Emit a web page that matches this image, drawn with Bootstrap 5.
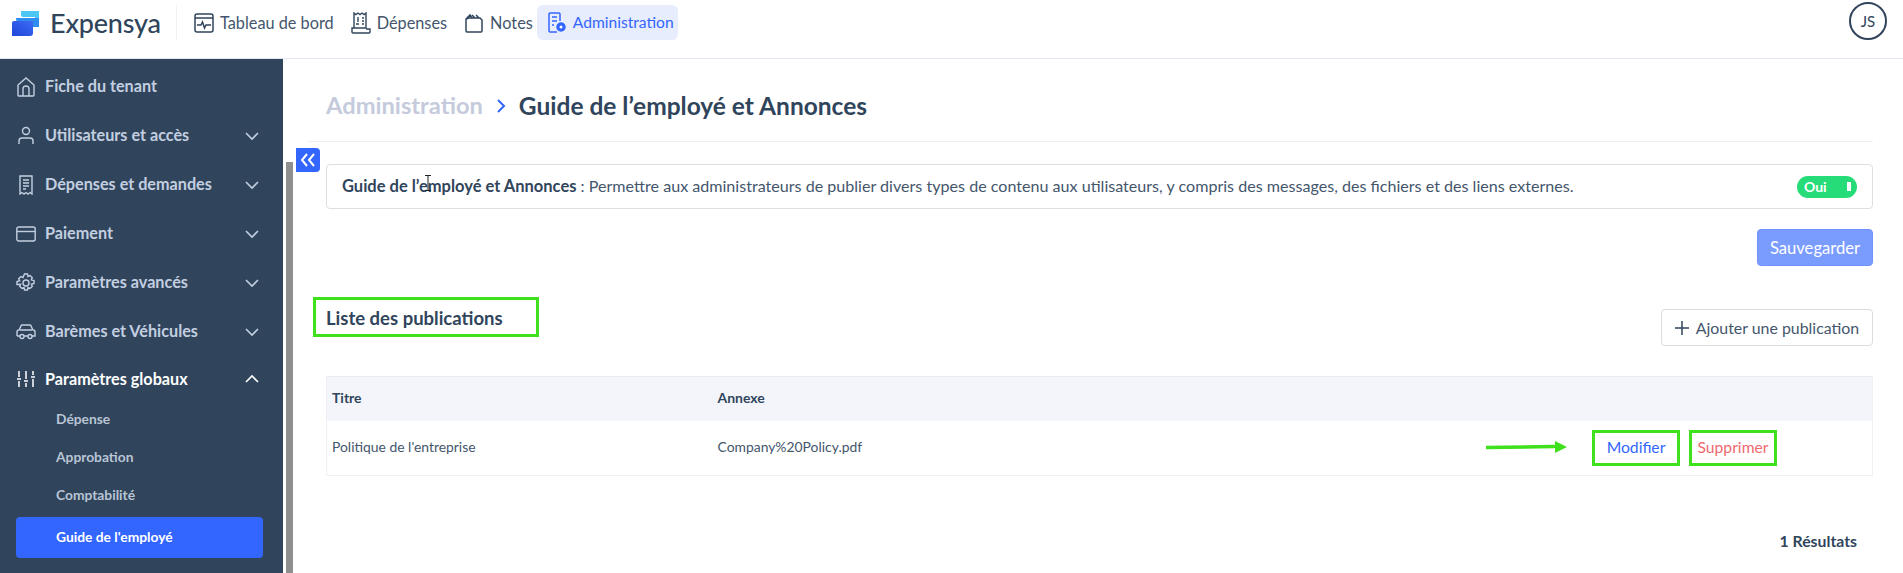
<!DOCTYPE html>
<html lang="fr">
<head>
<meta charset="utf-8">
<title>Expensya</title>
<link href="https://cdn.jsdelivr.net/npm/bootstrap@5.3.0/dist/css/bootstrap.min.css" rel="stylesheet">
<style>
html,body{height:573px;overflow:hidden}
body{font-family:Lato,"Liberation Sans",sans-serif;color:#30455c;background:#fff;display:flex;flex-direction:column;position:relative}
svg{display:block;flex:none}
.top-strip{height:59px;padding:5px 16px 0 11px;border-bottom:1px solid #e4e4f4;flex:none;align-items:flex-start}
.brand-box{width:166px;height:35px;border-right:1px solid #f0f0f0;margin-right:17px;gap:9px}
.brand-word{font-size:27px;font-weight:500;letter-spacing:-.2px;line-height:35px;color:#30455c}
.top-link{height:35px;display:flex;align-items:center;gap:6px;font-size:16.3px;color:#44566c;text-decoration:none;margin-right:17px;padding-top:1px}
.top-link.is-on{background:#e8edfd;color:#3366ff;border-radius:6px;padding:1px 4px 0 10px;margin-left:-13px;margin-right:0;width:141px;font-size:15.6px}
.avatar-ring{width:38px;height:38px;border:2px solid #30455c;border-radius:50%;margin:-3px 0 0 auto;font-size:15px;color:#30455c;display:flex;align-items:center;justify-content:center}
.shell{flex:1;min-height:0}
.side-panel{width:283px;background:#30455c;padding:3px 0 0 16px;flex:none;overflow:hidden}
.side-row{height:49px;width:244px;display:flex;align-items:center;color:#c3cfe0;font-size:16.2px;font-weight:700;text-decoration:none}
.side-row .lab{margin-left:9px;flex:1}
.side-row.is-open{color:#fff;margin-top:2px;height:42px}
.side-sub{display:flex;align-items:center;height:38px;width:247px;padding-left:40px;color:#b9c4d4;font-size:13.8px;font-weight:700;text-decoration:none}
.side-sub.is-on{height:41px;background:#3366ff;color:#fff;border-radius:4px;margin-top:3px}
.gutter{width:13px;flex:none;padding:103px 3px 0 3px}
.thumb{height:100%;background:#8f8f8f}
.work{flex:1;min-width:0;padding-left:12px;position:relative}
.head-strip{height:83px;padding:12px 0 0 18px;margin-right:30px;border-bottom:1px solid #eceef2;gap:12px;font-size:24.5px;font-weight:700}
.crumb-off{color:#c5cbdc;font-size:23.7px}
.body-pad{padding:22px 30px 0 18px}
.info-box{height:45px;border:1px solid #dfdfe3;border-radius:4px;padding:0 15px 0 15px;font-size:16.1px;color:#44566c}
.info-box b{color:#30455c;font-size:16.5px}
.switch-pill{width:60px;height:22px;background:#26dc78;border-radius:11px;color:#fff;font-size:14px;font-weight:700;padding:0 6px 0 7px;margin-left:auto}
.switch-bar{width:4px;height:9px;background:#fff;margin-left:auto}
.save-btn{--bs-btn-bg:#7b9cff;--bs-btn-border-color:#6f92fb;--bs-btn-color:#fff;width:116px;height:37px;padding:1px 0 0;font-size:16.6px;border-radius:4px}
.list-row{margin-top:31px;height:49px}
.list-title{width:226px;height:40px;border:3px solid #3fe01c;padding:2px 0 0 10px;margin:0 0 0 -13px;font-size:18.5px;font-weight:700;color:#30455c;display:flex;align-items:center}
.add-btn{--bs-btn-bg:#fff;--bs-btn-border-color:#dcdcdf;--bs-btn-color:#44566c;width:212px;height:37px;margin-top:12px;padding:0;font-size:15.9px;border-radius:4px;gap:7px}
.pub-table{margin:30px 0 0;table-layout:fixed;border:1px solid #f0f0f5;font-size:13.9px;--bs-table-color:#44566c}
.pub-table th{background:#f3f5fb;height:44px;padding:0 5px 2px;vertical-align:middle;font-weight:700;color:#30455c;font-size:14px;border-bottom:0;border-top:1px solid #e8eaf4}
.pub-table td{height:55px;padding:0 5px;vertical-align:middle;border-bottom:1px solid #f0f0f5}
.act-wrap{padding-right:90px;gap:9px}
.mark-btn{width:88px;height:36px;border:3px solid #3fe01c;display:flex;align-items:center;justify-content:center;font-size:15.7px;text-decoration:none}
.act-edit{color:#3366ff}
.act-del{color:#f0696f}
.total-line{margin-top:55px;padding-right:16px;font-size:15.8px;font-weight:700;line-height:20px;text-align:right}
.fold-tab{position:absolute;left:0;top:89px;width:24px;height:24px;background:#3366ff;border-radius:0 4px 4px 0;display:flex;align-items:center;justify-content:center}
.arrow-mark{position:absolute;left:1486px;top:440px}
.cursor-mark{position:absolute;left:424px;top:175px}
</style>
</head>
<body>
<nav class="top-strip d-flex">
  <div class="brand-box d-flex align-items-center">
    <svg width="30" height="28" viewBox="0 0 30 28"><defs><linearGradient id="g1" x1="0" y1="1" x2="1" y2="0"><stop offset="0" stop-color="#1f45d8"/><stop offset="1" stop-color="#3c6cf5"/></linearGradient></defs><path d="M10 2h18v8H24V8H12a2 2 0 0 1-2-2z" fill="#4cc6f5"/><path d="M5 9h23v9H6z" fill="#2f8df0" /><path d="M1 14a2 2 0 0 1 2-2h19v12a3 3 0 0 1-3 3H1z" fill="url(#g1)"/></svg>
    <span class="brand-word">Expensya</span>
  </div>
  <a class="top-link" href="#"><svg width="20" height="20" viewBox="0 0 20 20" fill="none" stroke="#30455c" stroke-width="1.5"><rect x="1" y="1" width="18" height="18" rx="2"/><path d="M1 5h18M3 12h4l1.500-3 2 6 1.500-3h5"/></svg>Tableau de bord</a>
  <a class="top-link" href="#"><svg width="20" height="22" viewBox="0 0 20 22" fill="none" stroke="#30455c" stroke-width="1.400"><path d="M3 1l2 1.500L7 1l2 1.500L11 1l2 1.500L15 1v15H3zM3 16H1v4a1 1 0 0 0 1 1h16a1 1 0 0 0 1-1v-3H15"/><path d="M11 6h2M11 9h2M11 12h2M5 12h3M7 5v5"/></svg>Dépenses</a>
  <a class="top-link" href="#"><svg width="20" height="20" viewBox="0 0 20 20" fill="none" stroke="#30455c" stroke-width="1.500"><path d="M2 6l3-1h11l2 2v11a1 1 0 0 1-1 1H3a1 1 0 0 1-1-1zM2 6l4-4 2 3M8 2l3 3M12 2l3 3"/></svg>Notes</a>
  <a class="top-link is-on" href="#"><svg width="20" height="22" viewBox="0 0 20 22" fill="none" stroke="#3366ff" stroke-width="1.500"><path d="M10 20H3a1 1 0 0 1-1-1V2a1 1 0 0 1 1-1h9a1 1 0 0 1 1 1v7M5 5h5M5 9h5M5 13h2"/><circle cx="14" cy="15" r="4" fill="#3366ff"/><circle cx="14" cy="15" r="1.500" fill="#fff" stroke="none"/></svg>Administration</a>
  <div class="avatar-ring">JS</div>
</nav>
<div class="shell d-flex">
  <aside class="side-panel">
    <a class="side-row" href="#"><svg width="20" height="20" viewBox="0 0 20 20" fill="none" stroke="#c3cfe0" stroke-width="1.400"><path d="M2 8l8-7 8 7v10a1 1 0 0 1-1 1H3a1 1 0 0 1-1-1z"/><path d="M7 19v-7a3 3 0 0 1 6 0v7"/></svg><span class="lab">Fiche du tenant</span></a>
    <a class="side-row" href="#"><svg width="20" height="20" viewBox="0 0 20 20" fill="none" stroke="#c3cfe0" stroke-width="1.400"><circle cx="10" cy="5" r="3.500"/><path d="M3 18v-3a3 3 0 0 1 3-3h8a3 3 0 0 1 3 3v3"/></svg><span class="lab">Utilisateurs et accès</span><svg width="16" height="10" viewBox="0 0 16 10" fill="none" stroke="#c3cfe0" stroke-width="1.600"><path d="M2 2l6 6 6-6"/></svg></a>
    <a class="side-row" href="#"><svg width="20" height="20" viewBox="0 0 20 20" fill="none" stroke="#c3cfe0" stroke-width="1.400"><path d="M4 1h12v18l-2-1.500-2 1.500-2-1.500L8 19l-2-1.500L4 19z"/><path d="M7 5h6M7 8h6M7 11h6M7 14h3"/></svg><span class="lab">Dépenses et demandes</span><svg width="16" height="10" viewBox="0 0 16 10" fill="none" stroke="#c3cfe0" stroke-width="1.600"><path d="M2 2l6 6 6-6"/></svg></a>
    <a class="side-row" href="#"><svg width="20" height="16" viewBox="0 0 20 16" fill="none" stroke="#c3cfe0" stroke-width="1.400"><rect x=".8" y="1" width="18.400" height="14" rx="2"/><path d="M.8 5.500h18.400"/></svg><span class="lab">Paiement</span><svg width="16" height="10" viewBox="0 0 16 10" fill="none" stroke="#c3cfe0" stroke-width="1.600"><path d="M2 2l6 6 6-6"/></svg></a>
    <a class="side-row" href="#"><svg width="20" height="20" viewBox="0 0 20 20" fill="none" stroke="#c3cfe0" stroke-width="1.400"><circle cx="10" cy="10" r="3"/><path d="M8.500 1h3l.5 2.500 2-1 2.300 2.200-1 2.100 2.700.7v3l-2.700.7 1 2.100-2.300 2.200-2-1-.5 2.500h-3l-.5-2.500-2 1-2.300-2.200 1-2.100L1 11.500v-3l2.700-.7-1-2.100L5 3.500l2 1z"/></svg><span class="lab">Paramètres avancés</span><svg width="16" height="10" viewBox="0 0 16 10" fill="none" stroke="#c3cfe0" stroke-width="1.600"><path d="M2 2l6 6 6-6"/></svg></a>
    <a class="side-row" href="#"><svg width="20" height="16" viewBox="0 0 20 16" fill="none" stroke="#c3cfe0" stroke-width="1.400"><path d="M1 12V8a2 2 0 0 1 2-2l2-4a1 1 0 0 1 1-1h8a1 1 0 0 1 1 1l2 4a2 2 0 0 1 2 2v4h-3M1 12h3M8 12h4M4 6h12"/><circle cx="6" cy="12.500" r="2"/><circle cx="14" cy="12.500" r="2"/></svg><span class="lab">Barèmes et Véhicules</span><svg width="16" height="10" viewBox="0 0 16 10" fill="none" stroke="#c3cfe0" stroke-width="1.600"><path d="M2 2l6 6 6-6"/></svg></a>
    <a class="side-row is-open" href="#"><svg width="20" height="18" viewBox="0 0 20 18" fill="none" stroke="#fff" stroke-width="1.500"><path d="M3 1v6M3 11v6M10 1v8M10 13v4M17 1v4M17 9v8M1 9h4M8 11h4M15 7h4"/></svg><span class="lab">Paramètres globaux</span><svg width="16" height="10" viewBox="0 0 16 10" fill="none" stroke="#fff" stroke-width="1.600"><path d="M2 8l6-6 6 6"/></svg></a>
    <a class="side-sub" href="#">Dépense</a>
    <a class="side-sub" href="#">Approbation</a>
    <a class="side-sub" href="#">Comptabilité</a>
    <a class="side-sub is-on" href="#">Guide de l'employé</a>
  </aside>
  <div class="gutter"><div class="thumb"></div></div>
  <main class="work">
    <div class="head-strip d-flex align-items-center">
      <span class="crumb-off">Administration</span>
      <svg width="12" height="16" viewBox="0 0 12 16" fill="none" stroke="#3366ff" stroke-width="2"><path d="M3 2l6 6-6 6"/></svg>
      <span>Guide de l’employé et Annonces</span>
    </div>
    <div class="body-pad">
      <div class="info-box d-flex align-items-center"><span><b>Guide de l’employé et Annonces</b> : Permettre aux administrateurs de publier divers types de contenu aux utilisateurs, y compris des messages, des fichiers et des liens externes.</span>
        <div class="switch-pill d-flex align-items-center">Oui<span class="switch-bar"></span></div>
      </div>
      <div class="d-flex justify-content-end mt-3 pt-1"><button class="btn save-btn" type="button">Sauvegarder</button></div>
      <div class="list-row d-flex justify-content-between align-items-start">
        <h5 class="list-title">Liste des publications</h5>
        <button class="btn add-btn d-flex align-items-center justify-content-center" type="button"><svg width="14" height="14" viewBox="0 0 14 14" fill="none" stroke="#30455c" stroke-width="1.500"><path d="M7 0v14M0 7h14"/></svg>Ajouter une publication</button>
      </div>
      <table class="table pub-table">
        <colgroup><col style="width:386px"><col style="width:500px"><col></colgroup>
        <thead><tr><th>Titre</th><th>Annexe</th><th></th></tr></thead>
        <tbody><tr><td>Politique de l'entreprise</td><td>Company%20Policy.pdf</td><td><div class="d-flex justify-content-end act-wrap"><a class="mark-btn act-edit" href="#">Modifier</a><a class="mark-btn act-del" href="#">Supprimer</a></div></td></tr></tbody>
      </table>
      <div class="total-line">1 Résultats</div>
    </div>
    <div class="fold-tab"><svg width="16" height="14" viewBox="0 0 16 14" fill="none" stroke="#fff" stroke-width="2"><path d="M7 1L2 7l5 6M14 1L9 7l5 6"/></svg></div>
  </main>
</div>
<svg class="arrow-mark" width="82" height="14" viewBox="0 0 82 14"><path d="M1 7.500L68 6.500" stroke="#3fe01c" stroke-width="3.500" stroke-linecap="round"/><path d="M69 1l12 6-12 6z" fill="#3fe01c"/></svg>
<svg class="cursor-mark" width="8" height="16" viewBox="0 0 8 16" fill="none" stroke="#222" stroke-width="1"><path d="M1 .5h6M4 .5v15M1 15.500h6"/></svg>
<script src="https://cdn.jsdelivr.net/npm/bootstrap@5.3.0/dist/js/bootstrap.bundle.min.js"></script>
</body>
</html>
